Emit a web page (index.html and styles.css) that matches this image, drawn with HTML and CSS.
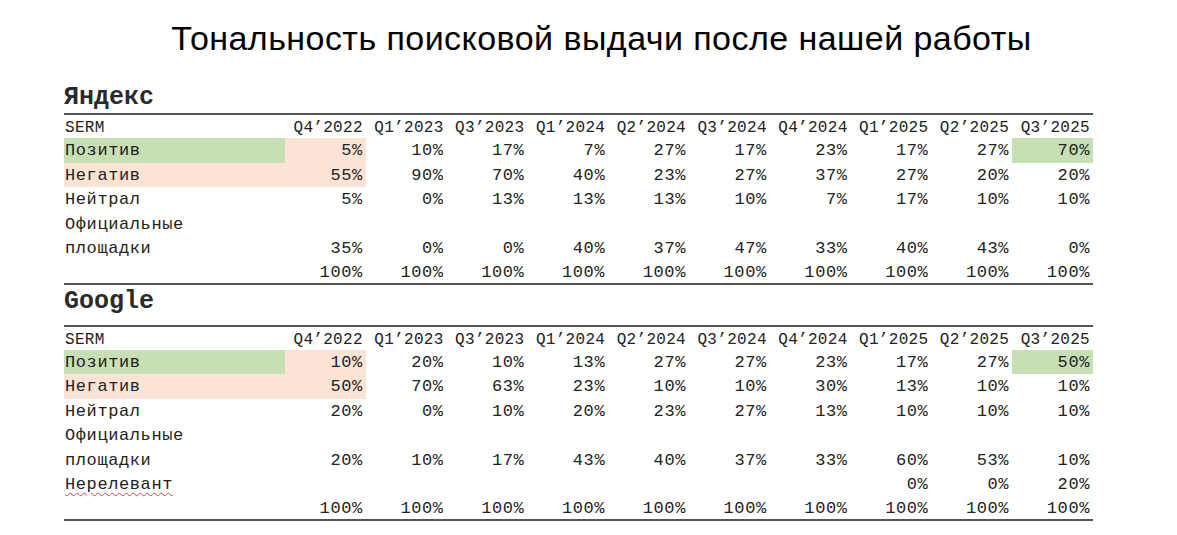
FILE: index.html
```html
<!DOCTYPE html>
<html lang="ru">
<head>
<meta charset="utf-8">
<title>Тональность поисковой выдачи</title>
<link rel="stylesheet" href="styles.css">
</head>
<body>
<div class="page">
  <h1 class="title">Тональность поисковой выдачи после нашей работы</h1>

  <section class="block block-first">
    <h2 class="engine">Яндекс</h2>
    <table class="serm">
      <colgroup><col class="c-label"><col span="10" class="c-num"></colgroup>
      <tr class="head"><td>SERM</td><td>Q4’2022</td><td>Q1’2023</td><td>Q3’2023</td><td>Q1’2024</td><td>Q2’2024</td><td>Q3’2024</td><td>Q4’2024</td><td>Q1’2025</td><td>Q2’2025</td><td>Q3’2025</td></tr>
      <tr><td class="green">Позитив</td><td class="peach">5%</td><td>10%</td><td>17%</td><td>7%</td><td>27%</td><td>17%</td><td>23%</td><td>17%</td><td>27%</td><td class="green">70%</td></tr>
      <tr><td class="peach">Негатив</td><td class="peach">55%</td><td>90%</td><td>70%</td><td>40%</td><td>23%</td><td>27%</td><td>37%</td><td>27%</td><td>20%</td><td>20%</td></tr>
      <tr><td>Нейтрал</td><td>5%</td><td>0%</td><td>13%</td><td>13%</td><td>13%</td><td>10%</td><td>7%</td><td>17%</td><td>10%</td><td>10%</td></tr>
      <tr><td>Официальные</td><td></td><td></td><td></td><td></td><td></td><td></td><td></td><td></td><td></td><td></td></tr>
      <tr><td>площадки</td><td>35%</td><td>0%</td><td>0%</td><td>40%</td><td>37%</td><td>47%</td><td>33%</td><td>40%</td><td>43%</td><td>0%</td></tr>
      <tr class="total"><td></td><td>100%</td><td>100%</td><td>100%</td><td>100%</td><td>100%</td><td>100%</td><td>100%</td><td>100%</td><td>100%</td><td>100%</td></tr>
    </table>
  </section>

  <section class="block">
    <h2 class="engine">Google</h2>
    <table class="serm">
      <colgroup><col class="c-label"><col span="10" class="c-num"></colgroup>
      <tr class="head"><td>SERM</td><td>Q4’2022</td><td>Q1’2023</td><td>Q3’2023</td><td>Q1’2024</td><td>Q2’2024</td><td>Q3’2024</td><td>Q4’2024</td><td>Q1’2025</td><td>Q2’2025</td><td>Q3’2025</td></tr>
      <tr><td class="green">Позитив</td><td class="peach">10%</td><td>20%</td><td>10%</td><td>13%</td><td>27%</td><td>27%</td><td>23%</td><td>17%</td><td>27%</td><td class="green">50%</td></tr>
      <tr><td class="peach">Негатив</td><td class="peach">50%</td><td>70%</td><td>63%</td><td>23%</td><td>10%</td><td>10%</td><td>30%</td><td>13%</td><td>10%</td><td>10%</td></tr>
      <tr><td>Нейтрал</td><td>20%</td><td>0%</td><td>10%</td><td>20%</td><td>23%</td><td>27%</td><td>13%</td><td>10%</td><td>10%</td><td>10%</td></tr>
      <tr><td>Официальные</td><td></td><td></td><td></td><td></td><td></td><td></td><td></td><td></td><td></td><td></td></tr>
      <tr><td>площадки</td><td>20%</td><td>10%</td><td>17%</td><td>43%</td><td>40%</td><td>37%</td><td>33%</td><td>60%</td><td>53%</td><td>10%</td></tr>
      <tr><td><span class="squiggle">Нерелевант</span></td><td></td><td></td><td></td><td></td><td></td><td></td><td></td><td>0%</td><td>0%</td><td>20%</td></tr>
      <tr class="total"><td></td><td>100%</td><td>100%</td><td>100%</td><td>100%</td><td>100%</td><td>100%</td><td>100%</td><td>100%</td><td>100%</td><td>100%</td></tr>
    </table>
  </section>
</div>
</body>
</html>
```

FILE: styles.css
```css
html, body {
  margin: 0;
  padding: 0;
  background: #ffffff;
}

.page {
  width: 1029px;
  margin-left: 64px;
  padding-top: 16px;
  color: #1e1e1e;
}

.title {
  margin: 0;
  padding-left: 46px;
  text-align: center;
  font-family: "Liberation Sans", Arial, sans-serif;
  font-weight: normal;
  font-size: 34px;
  letter-spacing: 0.45px;
  line-height: 44px;
  height: 46px;
  color: #000;
  white-space: nowrap;
}

.block {
  display: flex;
  flex-direction: column;
}

.engine {
  margin: 0;
  box-sizing: border-box;
  font-family: "Liberation Mono", "Courier New", monospace;
  font-weight: bold;
  font-size: 25px;
  line-height: 30px;
  height: 42px;
  padding-top: 2px;
  display: flex;
  align-items: flex-start;
  color: #2a2a2a;
  border-bottom: 2px solid #555;
}

.block-first .engine {
  height: 53px;
  padding-top: 0;
  align-items: flex-end;
}

.serm {
  width: 1029px;
  table-layout: fixed;
  border-collapse: collapse;
  font-family: "Liberation Mono", "Courier New", monospace;
  font-size: 17px;
  letter-spacing: 0.6px;
  color: #222;
  border-bottom: 2px solid #555;
}

.c-label { width: 221px; }
.c-num { width: 80.8px; }

.serm td {
  padding: 2px 3px 0 1px;
  line-height: 22.5px;
  text-align: right;
  white-space: nowrap;
}

.serm td:first-child {
  text-align: left;
}

.serm .head td {
  padding-top: 3px;
  line-height: 20px;
  font-size: 16px;
  letter-spacing: 0.3px;
}

.serm .total td {
  line-height: 20px;
}

.green { background: #c6e0b4; }
.peach { background: #fbe4d6; }

.squiggle {
  text-decoration: underline wavy #e23b3b;
  text-decoration-thickness: 1px;
  text-underline-offset: 3px;
}
```
